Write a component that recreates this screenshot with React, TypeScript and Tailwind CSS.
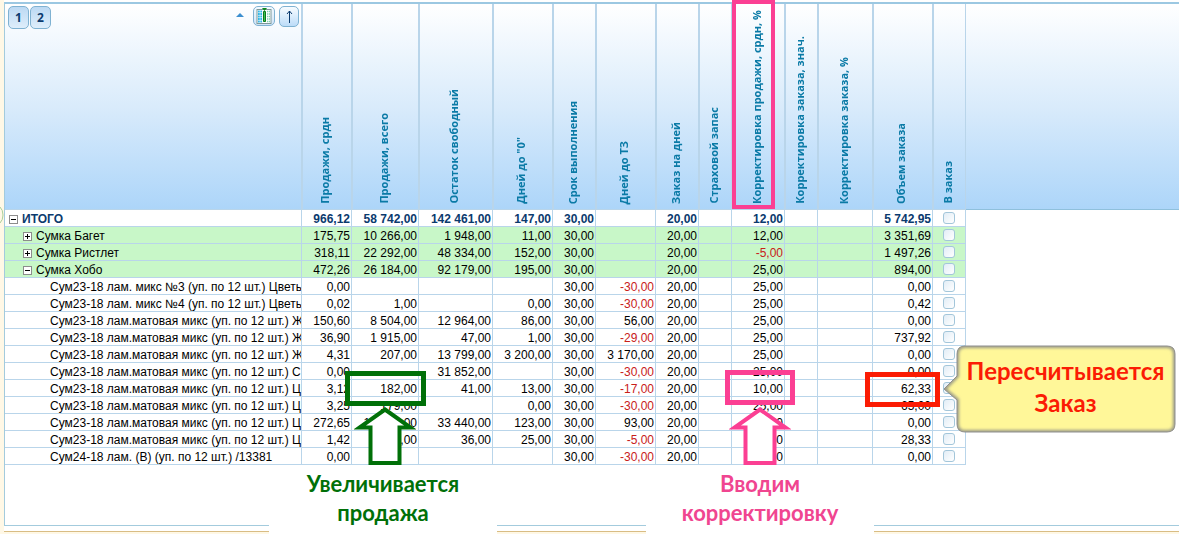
import { useState } from 'react';

interface Row {
  name: string;
  level: 0 | 1 | 2;
  open?: boolean;
  values: string[];
}

// Width classes are listed in the same order as the columns
const COLUMNS = [
  { title: 'Продажи, срдн', width: 'w-[50px]' },
  { title: 'Продажи, всего', width: 'w-[67px]' },
  { title: 'Остаток свободный', width: 'w-[74px]' },
  { title: 'Дней до "0"', width: 'w-[60px]' },
  { title: 'Срок выполнения', width: 'w-[43px]' },
  { title: 'Дней до ТЗ', width: 'w-[60px]' },
  { title: 'Заказ на дней', width: 'w-[43px]' },
  { title: 'Страховой запас', width: 'w-[33px]' },
  { title: 'Корректировка продажи, срдн, %', width: 'w-[53px]' },
  { title: 'Корректировка заказа, знач.', width: 'w-[33px]' },
  { title: 'Корректировка заказа, %', width: 'w-[55px]' },
  { title: 'Объем заказа', width: 'w-[60px]' },
  { title: 'В заказ', width: 'w-[33px]' },
];

const ROWS: Row[] = [
  { name: 'ИТОГО', level: 0, open: true, values: ['966,12', '58 742,00', '142 461,00', '147,00', '30,00', '', '20,00', '', '12,00', '', '', '5 742,95'] },
  { name: 'Сумка Багет', level: 1, open: false, values: ['175,75', '10 266,00', '1 948,00', '11,00', '30,00', '', '20,00', '', '12,00', '', '', '3 351,69'] },
  { name: 'Сумка Ристлет', level: 1, open: false, values: ['318,11', '22 292,00', '48 334,00', '152,00', '30,00', '', '20,00', '', '-5,00', '', '', '1 497,26'] },
  { name: 'Сумка Хобо', level: 1, open: true, values: ['472,26', '26 184,00', '92 179,00', '195,00', '30,00', '', '20,00', '', '25,00', '', '', '894,00'] },
  { name: 'Сум23-18 лам. микс №3 (уп. по 12 шт.) Цветы', level: 2, values: ['0,00', '', '', '', '30,00', '-30,00', '20,00', '', '25,00', '', '', '0,00'] },
  { name: 'Сум23-18 лам. микс №4 (уп. по 12 шт.) Цветы', level: 2, values: ['0,02', '1,00', '', '0,00', '30,00', '-30,00', '20,00', '', '25,00', '', '', '0,42'] },
  { name: 'Сум23-18 лам.матовая микс (уп. по 12 шт.) Ж', level: 2, values: ['150,60', '8 504,00', '12 964,00', '86,00', '30,00', '56,00', '20,00', '', '25,00', '', '', '0,00'] },
  { name: 'Сум23-18 лам.матовая микс (уп. по 12 шт.) Ж', level: 2, values: ['36,90', '1 915,00', '47,00', '1,00', '30,00', '-29,00', '20,00', '', '25,00', '', '', '737,92'] },
  { name: 'Сум23-18 лам.матовая микс (уп. по 12 шт.) Ж', level: 2, values: ['4,31', '207,00', '13 799,00', '3 200,00', '30,00', '3 170,00', '20,00', '', '25,00', '', '', '0,00'] },
  { name: 'Сум23-18 лам.матовая микс (уп. по 12 шт.) С', level: 2, values: ['0,00', '', '31 852,00', '', '30,00', '-30,00', '20,00', '', '25,00', '', '', '0,00'] },
  { name: 'Сум23-18 лам.матовая микс (уп. по 12 шт.) Ц', level: 2, values: ['3,12', '182,00', '41,00', '13,00', '30,00', '-17,00', '20,00', '', '10,00', '', '', '62,33'] },
  { name: 'Сум23-18 лам.матовая микс (уп. по 12 шт.) Ц', level: 2, values: ['3,25', '179,00', '', '0,00', '30,00', '-30,00', '20,00', '', '25,00', '', '', '65,00'] },
  { name: 'Сум23-18 лам.матовая микс (уп. по 12 шт.) Ц', level: 2, values: ['272,65', '15 040,00', '33 440,00', '123,00', '30,00', '93,00', '20,00', '', '25,00', '', '', '0,00'] },
  { name: 'Сум23-18 лам.матовая микс (уп. по 12 шт.) Ц', level: 2, values: ['1,42', '156,00', '36,00', '25,00', '30,00', '-5,00', '20,00', '', '25,00', '', '', '28,33'] },
  { name: 'Сум24-18 лам. (В) (уп. по 12 шт.) /13381', level: 2, values: ['0,00', '', '', '', '30,00', '-30,00', '20,00', '', '25,00', '', '', '0,00'] },
];

const INDENT = ['pl-1', 'pl-[18px]', 'pl-[45px]'];

function Toggle({ open, name }: { open: boolean; name: string }) {
  return (
    <button type="button" aria-label={name} aria-expanded={open} className="mr-1 shrink-0">
      <svg width="9" height="9" viewBox="0 0 9 9" shapeRendering="crispEdges">
        <rect x="0.5" y="0.5" width="8" height="8" fill="#fff" stroke="#8c8c8c" />
        <path d={open ? 'M2 4.5h5' : 'M2 4.5h5M4.5 2v5'} stroke="#000" />
      </svg>
    </button>
  );
}

function Toolbar() {
  return (
    <div className="flex items-start justify-between pt-[2px] pr-[2px] pl-[3px]">
      <div className="flex gap-px">
        {['1', '2'].map((n) => (
          <button
            key={n}
            type="button"
            className="h-[23px] w-[21px] rounded-[5px] border border-[#7fb2d2] bg-linear-to-b from-[#bcd9f3] to-[#deeefb] font-[Open_Sans,sans-serif] text-xs font-bold text-[#0a3a6e]"
          >
            {n}
          </button>
        ))}
      </div>
      <div className="flex items-start">
        <svg className="mt-[7px] mr-[9px]" width="8" height="4" viewBox="0 0 8 4">
          <path d="M0 4 4 0l4 4z" fill="#3d8fd0" />
        </svg>
        <button
          type="button"
          aria-label="Колонки"
          className="mr-1 flex h-5 w-[22px] items-center justify-center rounded-[5px] border border-[#7fb2d2] bg-linear-to-b from-[#f4faff] to-[#cfe4f7]"
        >
          <svg width="16" height="16" viewBox="0 0 16 16">
            <rect x="1" y="1.5" width="14" height="14" fill="#fff" stroke="#7f9a9a" />
            <path d="M2 3.500h4.500M2 6h4.500M2 8.500h4.500M2 11h4.500M2 13.500h4.500" stroke="#35b8e6" strokeWidth="2" strokeDasharray="1.800 .500" />
            <path d="M11 3.500h3.500M11 6h3.500M11 8.500h3.500M11 11h3.500M11 13.500h3.500" stroke="#7fd0b0" strokeWidth="1.500" strokeDasharray="1.200 .600" />
            <path d="M7.500 3.500h2v10h-2z" fill="#3fbf4f" stroke="#0a7a1c" />
            <path d="M6 0h5L8.500 3z" fill="#0a8a1c" />
          </svg>
        </button>
        <button
          type="button"
          aria-label="Вверх"
          className="flex h-[21px] w-5 items-center justify-center rounded-[5px] border border-[#7fb2d2] bg-linear-to-b from-[#f8fcff] to-[#bcdcf8]"
        >
          <svg width="9" height="13" viewBox="0 0 9 13" fill="none" stroke="#0a3a6e">
            <path d="M4.500 13V1M2 4l2.500-3L7 4" />
          </svg>
        </button>
      </div>
    </div>
  );
}

function UpArrow({ className, color }: { className: string; color: string }) {
  return (
    <svg className={className} width="62" height="58" viewBox="0 0 62 58">
      <path
        d="M31 2.500 56.500 20.500H45.500V56H16.500V20.500H5.500z"
        fill="#fff"
        stroke={color}
        strokeWidth="4"
        strokeMiterlimit="10"
      />
    </svg>
  );
}

export default function App() {
  const [checked, setChecked] = useState<number[]>([]);

  const toggleRow = (index: number) => {
    setChecked((prev) => (prev.includes(index) ? prev.filter((i) => i !== index) : [...prev, index]));
  };

  return (
    <div className="relative overflow-hidden bg-[#fff8e6] pl-1 font-['Liberation_Sans',Arial,sans-serif] text-xs text-black">
      <svg className="absolute top-[205px] left-0" width="4" height="20" viewBox="0 0 4 20">
        <path d="M0 2q3 3 3 8t-3 8" fill="none" stroke="#a9cf9a" />
      </svg>

      <div className="border-b border-[#d9bd84] bg-white pt-[2px] pb-[5px]">
        <div className="border-t-2 border-b border-l border-t-[#9cc8e2] border-b-[#a3cbdd] border-l-[#a3cbdd] pb-[60px]">
          <table className="w-full table-fixed border-separate border-spacing-0">
            <thead>
              <tr className="h-[206px] bg-linear-to-b from-white via-[#d9ebfb] to-[#acd5f9] text-[#0a7aa6]">
                <th className="w-[297px] border-r border-b border-[#b9d5ea] p-0 align-top font-normal">
                  <Toolbar />
                </th>
                {COLUMNS.map((col) => (
                  <th
                    key={col.title}
                    className={`${col.width} border-x border-b border-[#b9d5ea] p-0 pr-1 pb-[5px] align-bottom`}
                  >
                    <div className="flex justify-center">
                      <span className="rotate-180 font-[Open_Sans,sans-serif] text-[11px] leading-4 font-bold whitespace-nowrap [writing-mode:vertical-rl]">
                        {col.title}
                      </span>
                    </div>
                  </th>
                ))}
                <td className="border-b border-[#8fc0dc] p-0" />
              </tr>
            </thead>
            <tbody>
              {ROWS.map((row, index) => {
                const cell = `h-[17px] border-r border-b border-[#b9d5ea] p-0 leading-[14px] ${row.level === 1 ? 'bg-[#c8f7c8]' : ''}`;
                return (
                  <tr key={index} className={row.level === 0 ? 'font-bold text-[#0a3a6e]' : ''}>
                    <td className={`${cell} overflow-hidden pt-[2px]`}>
                      <div className={`flex h-[14px] items-center whitespace-nowrap ${INDENT[row.level]}`}>
                        {row.level < 2 && <Toggle open={!!row.open} name={row.name} />}
                        {row.name}
                      </div>
                    </td>
                    {row.values.map((value, i) => (
                      <td
                        key={i}
                        className={`${cell} pt-[2px] pr-px text-right whitespace-nowrap ${value.startsWith('-') ? 'text-[#c8201a]' : ''}`}
                      >
                        {value}
                      </td>
                    ))}
                    <td className={cell}>
                      <input
                        type="checkbox"
                        aria-label={`В заказ: ${row.name}`}
                        checked={checked.includes(index)}
                        onChange={() => toggleRow(index)}
                        className="mx-auto block size-3 appearance-none rounded-[3px] border border-[#a3c6da] bg-linear-to-br from-[#e2edf6] to-white checked:bg-[#3d8fd0]"
                      />
                    </td>
                    <td className="p-0" />
                  </tr>
                );
              })}
            </tbody>
          </table>
        </div>
      </div>
      <div className="h-[2px]" />

      {/* Sales note */}
      <div className="absolute top-[407px] left-[269px] w-[228px]">
        <UpArrow className="ml-[85px]" color="#007008" />
        <p className="bg-white pt-1 pb-2 text-center font-[Lato,sans-serif] text-[22px] leading-[29px] font-bold text-[#007008]">
          Увеличивается
          <br />
          продажа
        </p>
      </div>
      <div className="absolute top-[371px] left-[345px] h-[35px] w-[81px] border-5 border-[#007008]" />

      {/* Correction note */}
      <div className="absolute top-[407px] left-[646px] w-[228px]">
        <UpArrow className="ml-[83px]" color="#fb3f93" />
        <p className="bg-white pt-1 pb-2 text-center font-[Lato,sans-serif] text-[22px] leading-[29px] font-bold text-[#f04590]">
          Вводим
          <br />
          корректировку
        </p>
      </div>
      <div className="absolute top-[370px] left-[725px] h-[35px] w-[70px] border-5 border-[#fb3f93]" />
      <div className="absolute top-0 left-[732px] h-[209px] w-[43px] border-4 border-[#fb3f93]" />

      {/* Order callout */}
      <div className="absolute top-[372px] left-[865px] h-[35px] w-[75px] border-5 border-[#fb1c04]" />
      <div className="absolute top-[345px] left-[943px] flex h-[88px] w-[233px] items-center justify-center pb-1 pl-[12px]">
        <svg className="absolute inset-0" width="233" height="88" viewBox="0 0 233 88">
          <defs>
            <filter id="soft" x="-5%" y="-10%" width="110%" height="120%">
              <feGaussianBlur stdDeviation="1.500" />
            </filter>
            <clipPath id="bubble">
              <path d="M22 1H224q8 0 8 8V79q0 8-8 8H22q-8 0-8-8V55L1 44 14 31V9q0-8 8-8z" />
            </clipPath>
          </defs>
          <g clipPath="url(#bubble)">
            <path d="M0 0H233V88H0z" fill="#fff799" />
            <path
              d="M22 1H224q8 0 8 8V79q0 8-8 8H22q-8 0-8-8V55L1 44 14 31V9q0-8 8-8z"
              fill="none"
              stroke="#9a9a88"
              strokeWidth="4"
              filter="url(#soft)"
            />
          </g>
          <path
            d="M22 1H224q8 0 8 8V79q0 8-8 8H22q-8 0-8-8V55L1 44 14 31V9q0-8 8-8z"
            fill="none"
            stroke="#8f8f8f"
          />
        </svg>
        <p className="relative text-center font-[Lato,sans-serif] text-2xl leading-8 font-bold text-[#fb1c04]">
          Пересчитывается
          <br />
          Заказ
        </p>
      </div>
    </div>
  );
}
